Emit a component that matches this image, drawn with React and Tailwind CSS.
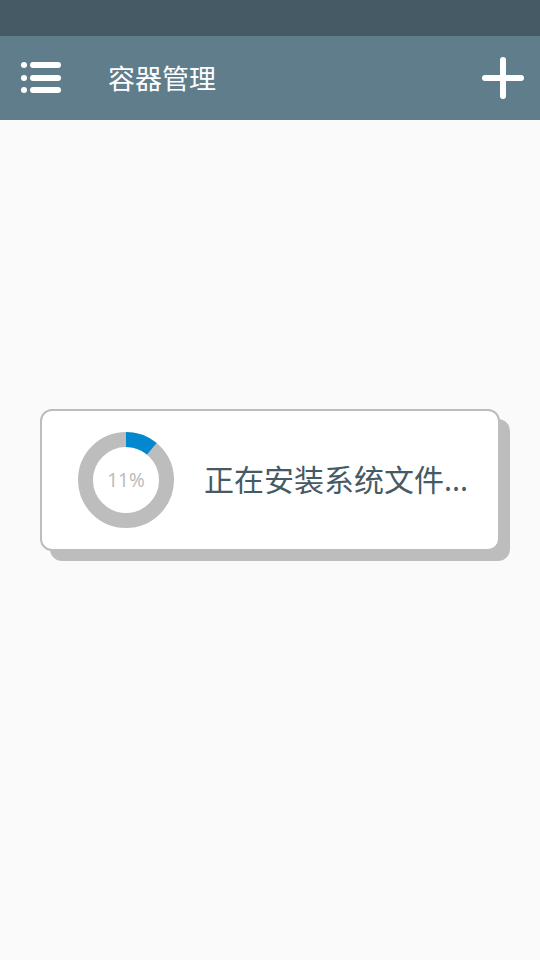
const FONT = { fontFamily: '"Noto Sans", "Noto Sans CJK SC", sans-serif' };

const MenuIcon = () => (
  <svg width="44" height="40" viewBox="0 0 44 40">
    <g fill="#fff">
      <circle cx="4" cy="7" r="3" />
      <circle cx="4" cy="20" r="3" />
      <circle cx="4" cy="32" r="3" />
    </g>
    <g stroke="#fff" strokeWidth="6" strokeLinecap="round">
      <line x1="13" y1="7" x2="38" y2="7" />
      <line x1="13" y1="20" x2="38" y2="20" />
      <line x1="13" y1="32" x2="38" y2="32" />
    </g>
  </svg>
);

const PlusIcon = () => (
  <svg width="42" height="42" viewBox="0 0 42 42">
    <g stroke="#fff" strokeWidth="6" strokeLinecap="round">
      <line x1="21" y1="3" x2="21" y2="39" />
      <line x1="3" y1="21" x2="39" y2="21" />
    </g>
  </svg>
);

const Ring = ({ pct }) => {
  const r = 40.5;
  const c = 2 * Math.PI * r;
  return (
    <div className="relative w-[96px] h-[96px]">
      <svg width="96" height="96" viewBox="0 0 96 96" className="-rotate-90">
        <circle cx="48" cy="48" r={r} fill="none" stroke="#bdbdbd" strokeWidth="15" />
        <circle
          cx="48"
          cy="48"
          r={r}
          fill="none"
          stroke="#0288d1"
          strokeWidth="15"
          strokeDasharray={`${(c * pct) / 100} ${c}`}
        />
      </svg>
      <div className="absolute inset-0 flex items-center justify-center text-[19px] text-[#bdbdbd]">
        {pct}%
      </div>
    </div>
  );
};

export default function App() {
  return (
    <div className="w-[540px] h-[960px] bg-[#fafafa] flex flex-col" style={FONT}>
      <div className="h-[36px] bg-[#455a64]" />
      <div className="h-[84px] bg-[#607d8b] flex items-center pl-[20px] pr-[16px]">
        <MenuIcon />
        <div className="ml-[44px] text-white text-[27px] leading-none">容器管理</div>
        <div className="ml-auto">
          <PlusIcon />
        </div>
      </div>

      <div className="flex-1 flex flex-col">
        <div className="mt-[289px] ml-[40px] w-[460px] h-[142px] bg-white border-2 border-[#bdbdbd] rounded-[12px] shadow-[10px_10px_0_0_#bdbdbd] flex items-center pl-[36px]">
          <Ring pct={11} />
          <div className="ml-[30px] text-[30px] text-[#455a64] leading-none">
            正在安装系统文件...
          </div>
        </div>
      </div>
    </div>
  );
}
